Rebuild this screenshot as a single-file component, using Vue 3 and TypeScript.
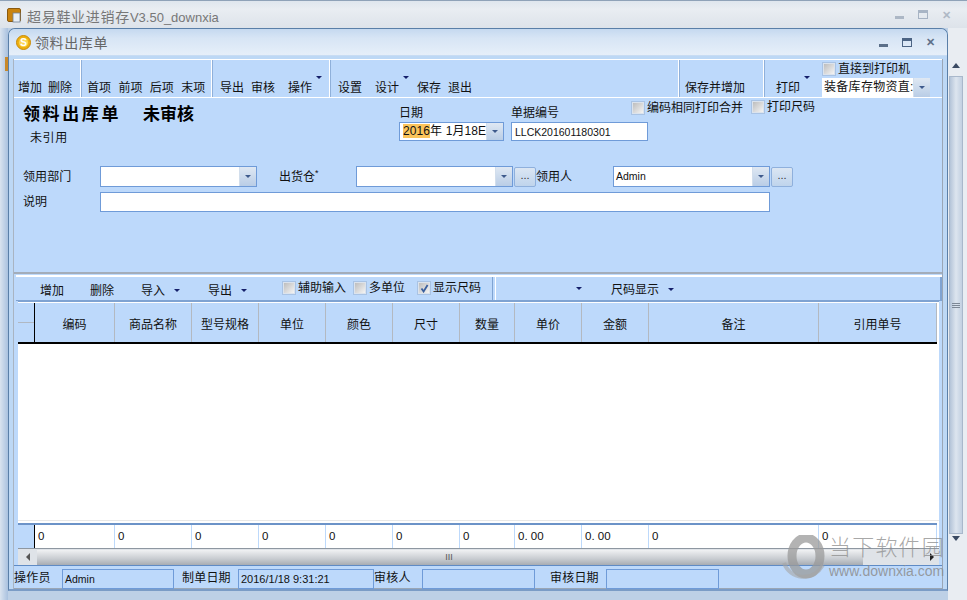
<script setup lang="ts">
const columns = [
  { name: '编码', w: 80, total: '0' },
  { name: '商品名称', w: 77, total: '0' },
  { name: '型号规格', w: 67, total: '0' },
  { name: '单位', w: 67, total: '0' },
  { name: '颜色', w: 67, total: '0' },
  { name: '尺寸', w: 67, total: '0' },
  { name: '数量', w: 55, total: '0' },
  { name: '单价', w: 67, total: '0. 00' },
  { name: '金额', w: 67, total: '0. 00' },
  { name: '备注', w: 170, total: '0' },
  { name: '引用单号', w: 118, total: '0' }
]
const gridCols = '17px ' + columns.map((c) => c.w + 'px').join(' ')
</script>

<template>
  <div class="outer">
    <header class="outer-title">
      <svg class="app-icon" width="15" height="15" viewBox="0 0 15 15">
        <rect x="0.5" y="0.5" width="13" height="13" rx="1.5" fill="#c9830f" stroke="#8a5a10" />
        <rect x="6" y="5" width="7" height="9" fill="#e8eef6" stroke="#6f7f95" stroke-width="0.8" />
      </svg>
      <span class="outer-name">超易鞋业进销存<small>V3.50_downxia</small></span>
      <span class="win-btns faded"><i class="min"></i><i class="max"></i><i class="close">✕</i></span>
    </header>

    <div class="desk">
      <div class="left-strip"><i></i></div>

      <section class="inner">
        <header class="inner-title">
          <svg class="coin" width="15" height="15" viewBox="0 0 15 15">
            <circle cx="7.5" cy="7.5" r="7" fill="#eeb010" stroke="#c88a08" />
            <circle cx="7.5" cy="7.5" r="4.6" fill="#fbd653" />
            <text x="7.5" y="11" text-anchor="middle" font-size="10" font-weight="700" fill="#fff" font-family="Liberation Sans">S</text>
          </svg>
          <span class="inner-name">领料出库单</span>
          <span class="win-btns"><i class="min"></i><i class="max"></i><i class="close">✕</i></span>
        </header>

        <div class="content">
          <div class="toolbar">
            <div class="tb-group g1"><span>增加</span><span>删除</span></div>
            <div class="tb-group g2"><span>首项</span><span>前项</span><span>后项</span><span>末项</span></div>
            <div class="tb-group g3"><span>导出</span><span>审核</span><span class="menu m-op">操作<i class="caret"></i></span></div>
            <div class="tb-group g4"><span>设置</span><span class="menu m-de">设计<i class="caret"></i></span><span>保存</span><span>退出</span></div>
            <div class="tb-group g5"><span>保存并增加</span></div>
            <div class="tb-group g6">
              <span class="menu m-pr">打印<i class="caret"></i></span>
              <div class="print-box">
                <label class="check"><i class="box"></i>直接到打印机</label>
                <div class="tb-combo"><span class="tb-combo-text">装备库存物资直:</span><b class="arrow"><i class="caret"></i></b></div>
              </div>
            </div>
          </div>

          <div class="form">
            <div class="head">
              <div class="title-col">
                <div class="doc-title"><span class="t1">领料出库单</span><span class="t2">未审核</span></div>
                <div class="doc-sub">未引用</div>
              </div>
              <div class="date-col">
                <div class="f-label">日期</div>
                <div class="date-input"><span><em>2016</em>年 1月18E</span><b class="arrow"><i class="caret"></i></b></div>
              </div>
              <div class="no-col">
                <div class="f-label">单据编号</div>
                <div class="no-input">LLCK201601180301</div>
              </div>
              <label class="check c-merge"><i class="box"></i>编码相同打印合并</label>
              <label class="check c-size"><i class="box"></i>打印尺码</label>
            </div>

            <div class="row r1">
              <span class="lbl l1">领用部门</span>
              <div class="combo"><b class="arrow"><i class="caret"></i></b></div>
              <span class="lbl l2">出货仓<sup>*</sup></span>
              <div class="combo"><b class="arrow"><i class="caret"></i></b></div>
              <button class="dots">...</button>
              <span class="lbl l3">领用人</span>
              <div class="combo"><span class="val">Admin</span><b class="arrow"><i class="caret"></i></b></div>
              <button class="dots">...</button>
            </div>
            <div class="row r2">
              <span class="lbl l1">说明</span>
              <div class="memo"></div>
            </div>
          </div>

          <div class="sub-toolbar">
            <div class="st-left">
              <span class="s-add">增加</span>
              <span class="s-del">删除</span>
              <span class="s-imp">导入<i class="caret"></i></span>
              <span class="s-exp">导出<i class="caret"></i></span>
              <label class="check s-c1"><i class="box"></i>辅助输入</label>
              <label class="check s-c2"><i class="box"></i>多单位</label>
              <label class="check s-c3"><i class="box">
                <svg width="9" height="9" viewBox="0 0 9 9"><path d="M1.5 4.5 L3.6 7.5 L7.6 1" fill="none" stroke="#3a5f9e" stroke-width="1.8" /></svg>
              </i>显示尺码</label>
            </div>
            <div class="st-right">
              <i class="caret c-blank"></i>
              <span class="s-size">尺码显示<i class="caret"></i></span>
            </div>
          </div>

          <div class="grid-wrap">
            <div class="grid-head" :style="{ gridTemplateColumns: gridCols }">
              <div class="corner"></div>
              <div v-for="c in columns" :key="c.name" class="th">{{ c.name }}</div>
            </div>
            <div class="grid-body"></div>
            <div class="grid-foot" :style="{ gridTemplateColumns: gridCols }">
              <div class="foot-corner"></div>
              <div v-for="c in columns" :key="c.name" class="td">{{ c.total }}</div>
            </div>
            <div class="h-scroll">
              <i class="h-left"></i>
              <div class="h-thumb"><span>III</span></div>
              <i class="h-right"></i>
            </div>
          </div>

          <footer class="status">
            <span class="st-lbl a">操作员</span>
            <div class="st-box b1">Admin</div>
            <span class="st-lbl b">制单日期</span>
            <div class="st-box b2">2016/1/18 9:31:21</div>
            <span class="st-lbl c">审核人</span>
            <div class="st-box b3"></div>
            <span class="st-lbl d">审核日期</span>
            <div class="st-box b4"></div>
          </footer>
        </div>
      </section>

      <aside class="v-scroll">
        <i class="up"></i>
        <div class="v-thumb"><span></span><span></span><span></span></div>
        <i class="down"></i>
      </aside>
    </div>

    <div class="watermark">
      <svg width="44" height="46" viewBox="0 0 44 46">
        <ellipse cx="24" cy="21" rx="14" ry="18" fill="none" stroke="#9a9a9a" stroke-width="9" opacity="0.75" />
        <path d="M2 28 C8 44 30 48 41 30" fill="none" stroke="#a5a5a5" stroke-width="4" opacity="0.6" />
      </svg>
      <div class="wm-text">
        <div class="wm-cn">当下软件园</div>
        <div class="wm-en">www.downxia.com</div>
      </div>
    </div>
  </div>
</template>

<style>
html, body { margin: 0; padding: 0; background: #cfdbe9; }
</style>

<style scoped>
* { box-sizing: border-box; }
i, em { font-style: normal; }
.outer {
  position: relative;
  width: 967px;
  height: 600px;
  overflow: hidden;
  display: flex;
  flex-direction: column;
  background: #bdd0e6;
  border-top: 1px solid #8fa2b8;
  font-family: "Liberation Sans", "Noto Sans CJK SC", sans-serif;
  font-size: 12px;
  color: #111;
}
.outer-title {
  height: 27px;
  flex: none;
  display: flex;
  align-items: center;
  padding: 0 12px 0 7px;
  background: linear-gradient(#dfe6ee, #e9edf2 30%, #dde3ea);
}
.app-icon { flex: none; margin-top: 2px; }
.outer-name { margin-left: 5px; font-size: 14px; letter-spacing: .7px; color: #777; margin-top: 2px; }
.outer-name small { font-size: 13px; letter-spacing: 0; }
.win-btns { margin-left: auto; display: flex; align-items: center; gap: 14px; padding-right: 4px; }
.win-btns i { display: block; }
.win-btns .min { width: 9px; height: 3px; background: #5b6f89; margin-top: 6px; }
.win-btns .max { width: 10px; height: 9px; border: 1px solid #4c6484; border-top-width: 3px; }
.win-btns .close { font-size: 11px; font-weight: 700; color: #5e7189; line-height: 12px; }
.win-btns.faded { opacity: .4; }

.desk { flex: 1; display: flex; min-height: 0; }
.left-strip { width: 8px; flex: none; background: linear-gradient(90deg, #d9e3ef, #a9c1df); padding-top: 29px; }
.left-strip i { display: block; width: 3px; height: 14px; margin-left: 5px; background: #c9892a; }
.inner {
  width: 940px;
  flex: none;
  height: 563px;
  display: flex;
  flex-direction: column;
  background: #bdd8f5;
  border: 1px solid #5a7fa8;
  border-bottom: 2px solid #7b9cc6;
  border-radius: 7px 7px 0 0;
}
.inner-title {
  height: 27px;
  flex: none;
  display: flex;
  align-items: center;
  padding: 0 8px 0 7px;
  border-radius: 6px 6px 0 0;
  background: linear-gradient(#c5d9f0, #d7e5f5 35%, #e6eff9);
  border-bottom: 1px solid #c8dcf3;
}
.inner-name { margin-left: 4px; font-size: 14px; letter-spacing: .6px; color: #666; }
.content {
  flex: 1;
  min-height: 0;
  margin: 3px 4px 0 4px;
  display: flex;
  flex-direction: column;
  background: #bdd9fb;
  border-left: 1px solid #a9b4c2;
  border-right: 1px solid #9aa6b5;
}

.toolbar {
  height: 39px;
  flex: none;
  display: flex;
  background: #bdd9fb;
  border-top: 1px solid #fff;
  border-bottom: 1px solid #fff;
}
.tb-group {
  display: flex;
  align-items: flex-end;
  gap: 6px;
  padding: 0 0 0 4px;
  border-right: 1px solid #fff;
  box-shadow: 1px 0 0 #8fb0da;
  line-height: 17px;
  white-space: nowrap;
}
.g1 { width: 67px; }
.g2 { width: 131px; padding-left: 6px; gap: 7.4px; }
.g3 { width: 118px; padding-left: 8px; gap: 7px; }
.g4 { width: 349px; padding-left: 8px; gap: 0; }
.g5 { width: 85px; padding-left: 6px; }
.g6 { flex: 1; padding-left: 12px; border-right: 0; box-shadow: none; }
.menu { position: relative; }
.menu .caret { position: absolute; right: -10px; top: -4px; }
.m-op { margin-left: 6px; }
.g4 span:nth-child(2) { margin-left: 13px; }
.g4 span:nth-child(3) { margin-left: 18px; }
.g4 span:nth-child(4) { margin-left: 7px; }
.caret {
  display: inline-block;
  width: 0;
  height: 0;
  border-left: 3px solid transparent;
  border-right: 3px solid transparent;
  border-top: 3px solid #15206b;
}
.print-box { margin-left: 16px; width: 108px; display: flex; flex-direction: column; align-self: stretch; justify-content: flex-end; }
.check { display: inline-flex; align-items: center; gap: 3px; white-space: nowrap; line-height: 14px; }
.box {
  flex: none;
  width: 12px;
  height: 12px;
  display: flex;
  align-items: center;
  justify-content: center;
  background: linear-gradient(135deg, #bdbdbd, #f4f4f4);
  border: 1px solid #dbe3ed;
  box-shadow: 0 0 0 1px #a9c3e4;
}
.print-box .check { margin-left: 1px; }
.tb-combo { height: 19px; display: flex; background: #fff; margin-top: 2px; overflow: hidden; }
.tb-combo-text { flex: 1; padding-left: 2px; font-size: 12px; line-height: 19px; letter-spacing: .3px; overflow: hidden; white-space: nowrap; }
.arrow {
  flex: none;
  width: 17px;
  display: flex;
  align-items: center;
  justify-content: center;
  background: linear-gradient(#dfe8f3, #b9cde6);
  border-left: 1px solid #d2deec;
}
.arrow .caret { border-top-color: #3e5a8c; }

.form { height: 176px; flex: none; display: flex; flex-direction: column; border-bottom: 2px solid #a3adba; }
.head { height: 67px; flex: none; display: flex; position: relative; }
.title-col { width: 385px; flex: none; padding: 6px 0 0 9px; }
.doc-title { display: flex; font-weight: 700; font-size: 17px; line-height: 22px; color: #000; }
.t1 { letter-spacing: 2.6px; }
.t2 { margin-left: 22px; }
.doc-sub { margin: 5px 0 0 7px; line-height: 15px; letter-spacing: .6px; }
.date-col { width: 112px; flex: none; padding-top: 7px; }
.no-col { width: 137px; flex: none; padding-top: 7px; }
.f-label { line-height: 16px; }
.date-input {
  margin-top: 1px;
  width: 105px;
  height: 19px;
  display: flex;
  background: #fff;
  border: 1px solid #6f9bd8;
  line-height: 17px;
  white-space: nowrap;
  overflow: hidden;
}
.date-input span { flex: 1; overflow: hidden; padding-left: 3px; letter-spacing: .1px; }
.date-input em { background: #fbc45a; }
.no-input {
  margin-top: 1px;
  height: 19px;
  background: #fff;
  border: 1px solid #6f9bd8;
  padding-left: 3px;
  line-height: 18px;
  font-size: 10.5px;
}
.c-merge { position: absolute; left: 618px; top: 3px; }
.c-size { position: absolute; left: 738px; top: 2px; }

.row { display: flex; align-items: center; flex: none; }
.r1 { margin-top: 1px; height: 21px; }
.r2 { margin-top: 5px; height: 20px; }
.lbl { flex: none; white-space: nowrap; line-height: 16px; }
.l1 { width: 77px; margin-left: 9px; letter-spacing: .1px; }
.l2 { width: 77px; margin-left: 22px; }
.l2 sup { font-size: 9px; line-height: 0; }
.l3 { width: 77px; }
.combo { width: 157px; height: 21px; display: flex; flex: none; background: #fff; border: 1px solid #6f9bd8; }
.combo .arrow { margin-left: auto; }
.val { padding-left: 2px; line-height: 19px; font-size: 10.5px; }
.dots {
  flex: none;
  margin: 0 0 0 1px;
  width: 22px;
  height: 20px;
  padding: 0 0 3px;
  font: 11px "Liberation Sans", sans-serif;
  color: #333;
  background: linear-gradient(#dbe6f3, #bfd4ec);
  border: 1px solid #8fb0dc;
  border-radius: 2px;
}
.memo { width: 670px; height: 20px; background: #fff; border: 1px solid #6f9bd8; flex: none; }

.sub-toolbar {
  height: 26px;
  flex: none;
  margin: 1px 0 0 2px;
  display: flex;
  background: #bdd9fb;
  border-top: 2px solid #fff;
  border-bottom: 1px solid #7fa3d2;
}
.st-left { width: 477px; flex: none; display: flex; align-items: center; border-right: 1px solid #7fa3d2; padding-top: 1px; }
.st-left > span, .s-size { white-space: nowrap; }
.s-add { margin-left: 24px; }
.s-del { margin-left: 26px; }
.s-imp { margin-left: 27px; }
.s-exp { margin-left: 28px; }
.st-left .caret, .s-size .caret { margin-left: 9px; vertical-align: 3px; }
.s-c1 { margin-left: 36px; margin-top: -3px; }
.s-c2 { margin-left: 8px; margin-top: -3px; }
.s-c3 { margin-left: 13px; margin-top: -2px; }
.st-right { flex: 1; display: flex; align-items: center; border-left: 1px solid #fff; border-right: 2px solid #7fa3d2; margin-left: 2px; }
.c-blank { margin-left: 80px; margin-top: -1px; }
.s-size { margin-left: 29px; }

.grid-wrap { flex: none; margin-left: 4px; width: 921px; display: flex; flex-direction: column; border-top: 1px solid #7fa3d2; background: #fff; }
.grid-head { display: grid; width: 919px; height: 42px; flex: none; background: #bdd9fb; border-bottom: 2px solid #000; border-top: 1px solid #fff; }
.corner { border-right: 1px solid #000; position: relative; background: linear-gradient(#bdd9fb 49%, #b0b8c2 49%, #b0b8c2 52%, #bdd9fb 52%); }
.th { display: flex; align-items: center; justify-content: center; border-right: 1px solid #b3b9c1; padding-top: 1px; }
.grid-body { height: 177px; flex: none; background: #fff; border-bottom: 1px solid #e8e8e8; }
.grid-foot { display: grid; width: 919px; height: 25px; flex: none; margin-top: 2px; background: #fff; border-top: 2px solid #6c93c8; }
.foot-corner { background: #bdd9fb; border-right: 1px solid #000; }
.td { padding-left: 3px; line-height: 22px; font-size: 11.5px; border-right: 1px solid #bdd9fb; white-space: nowrap; }
.h-scroll { height: 17px; flex: none; display: flex; align-items: center; background: #dfe3e8; border-top: 1px solid #8e97a1; }
.h-left, .h-right { flex: none; width: 0; height: 0; border-top: 4px solid transparent; border-bottom: 4px solid transparent; }
.h-left { margin-left: 8px; margin-right: 7px; border-right: 4px solid #555; }
.h-right { margin-left: 67px; border-left: 4px solid #222; }
.h-thumb { width: 826px; height: 15px; display: flex; align-items: center; justify-content: center; background: linear-gradient(#f0f1f3, #c7cbd0 60%, #a7acb3); color: #555; font-size: 9px; padding-right: 2px; }

.status { flex: 1; min-height: 0; display: flex; align-items: flex-start; padding-top: 3px; background: #bdd9fb; border-top: 1px solid #5f8bc5; border-bottom: 1px solid #9aa6b5; }
.st-lbl { flex: none; line-height: 16px; margin-top: 1px; letter-spacing: .2px; white-space: nowrap; }
.st-box { flex: none; height: 20px; border: 1px solid #6f9bd8; padding-left: 2px; line-height: 19px; font-size: 10.5px; white-space: nowrap; }
.a { width: 48px; }
.b1 { width: 112px; }
.b { margin-left: 8px; width: 56px; }
.b2 { width: 136px; font-size: 11px; }
.c { width: 48px; }
.b3 { width: 113px; }
.d { margin-left: 15px; width: 56px; }
.b4 { width: 113px; }

.v-scroll { width: 19px; flex: none; padding: 30px 4px 0 1px; display: flex; flex-direction: column; align-items: center; background: #e9edf2; }
.v-scroll .up { width: 0; height: 0; border-left: 4px solid transparent; border-right: 4px solid transparent; border-bottom: 5px solid #3a4a63; margin-top: 5px; margin-bottom: 8px; }
.v-thumb { width: 14px; height: 458px; display: flex; flex-direction: column; align-items: center; justify-content: center; gap: 1px; background: linear-gradient(90deg, #b4c4d8, #dde5ef 50%, #c2d0e1); border: 1px solid #a9b8cb; }
.v-thumb span { display: block; width: 8px; height: 1px; background: #7d8896; }
.v-scroll .down { width: 0; height: 0; border-left: 4px solid transparent; border-right: 4px solid transparent; border-top: 5px solid #3a4a63; margin-top: 2px; }

.watermark { position: absolute; left: 782px; top: 534px; display: flex; align-items: center; pointer-events: none; }
.wm-text { margin-left: 3px; margin-top: -7px; }
.wm-cn { font-family: "Noto Sans CJK SC", sans-serif; font-size: 22px; letter-spacing: 1.2px; line-height: 28px; height: 28px; color: rgba(140, 140, 140, .75); font-weight: 300; }
.wm-en { font-family: "Liberation Sans", sans-serif; font-size: 14px; line-height: 15px; margin-top: 5px; color: rgba(140, 140, 140, .85); }
</style>
